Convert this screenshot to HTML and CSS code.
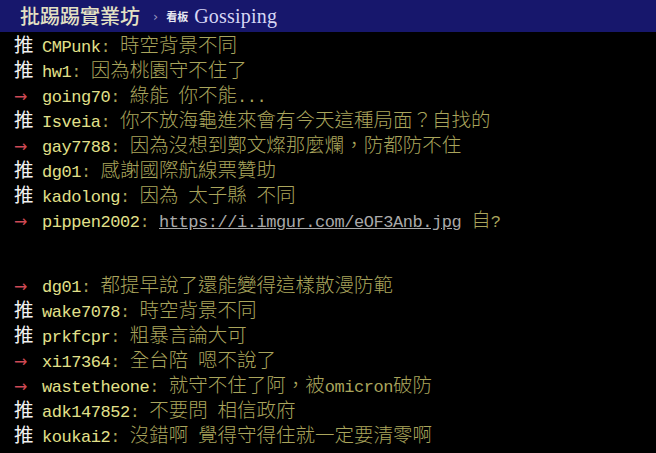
FILE: index.html
```html
<!DOCTYPE html>
<html lang="zh-Hant">
<head>
<meta charset="utf-8">
<title>批踢踢實業坊 › 看板 Gossiping</title>
<link rel="stylesheet" href="styles.css">
</head>
<body>
<header class="topbar">
  <span class="site">批踢踢實業坊</span>
  <span class="sep">›</span>
  <span class="board-label">看板</span>
  <span class="board">Gossiping</span>
</header>
<main class="comments">
  <div class="row"><span class="tag push">推</span><span class="user">CMPunk</span><span class="text"><span class="m">: </span>時空背景不同</span></div>
  <div class="row"><span class="tag push">推</span><span class="user">hw1</span><span class="text"><span class="m">: </span>因為桃園守不住了</span></div>
  <div class="row"><span class="tag arrow">→</span><span class="user">going70</span><span class="text"><span class="m">: </span>綠能<span class="m"> </span>你不能<span class="m">...</span></span></div>
  <div class="row"><span class="tag push">推</span><span class="user">Isveia</span><span class="text"><span class="m">: </span>你不放海龜進來會有今天這種局面？自找的</span></div>
  <div class="row"><span class="tag arrow">→</span><span class="user">gay7788</span><span class="text"><span class="m">: </span>因為沒想到鄭文燦那麼爛，防都防不住</span></div>
  <div class="row"><span class="tag push">推</span><span class="user">dg01</span><span class="text"><span class="m">: </span>感謝國際航線票贊助</span></div>
  <div class="row"><span class="tag push">推</span><span class="user">kadolong</span><span class="text"><span class="m">: </span>因為<span class="m"> </span>太子縣<span class="m"> </span>不同</span></div>
  <div class="row"><span class="tag arrow">→</span><span class="user">pippen2002</span><span class="text"><span class="m">: </span><a class="m link" href="#">https://i.imgur.com/eOF3Anb.jpg</a><span class="m"> </span>自<span class="m">?</span></span></div>
  <div class="gap"></div>
  <div class="row"><span class="tag arrow">→</span><span class="user">dg01</span><span class="text"><span class="m">: </span>都提早說了還能變得這樣散漫防範</span></div>
  <div class="row"><span class="tag push">推</span><span class="user">wake7078</span><span class="text"><span class="m">: </span>時空背景不同</span></div>
  <div class="row"><span class="tag push">推</span><span class="user">prkfcpr</span><span class="text"><span class="m">: </span>粗暴言論大可</span></div>
  <div class="row"><span class="tag arrow">→</span><span class="user">xi17364</span><span class="text"><span class="m">: </span>全台陪<span class="m"> </span>嗯不說了</span></div>
  <div class="row"><span class="tag arrow">→</span><span class="user">wastetheone</span><span class="text"><span class="m">: </span>就守不住了阿，被<span class="m">omicron</span>破防</span></div>
  <div class="row"><span class="tag push">推</span><span class="user">adk147852</span><span class="text"><span class="m">: </span>不要問<span class="m"> </span>相信政府</span></div>
  <div class="row"><span class="tag push">推</span><span class="user">koukai2</span><span class="text"><span class="m">: </span>沒錯啊<span class="m"> </span>覺得守得住就一定要清零啊</span></div>
</main>
</body>
</html>
```
FILE: styles.css
```css
html, body {
  margin: 0;
  padding: 0;
  background: #000;
}

body {
  width: 656px;
  height: 453px;
  overflow: hidden;
  font-family: "Noto Sans CJK TC", "Noto Sans CJK SC", sans-serif;
}

.topbar {
  height: 32px;
  background: #17176c;
  display: flex;
  align-items: center;
  padding-left: 20px;
  box-sizing: border-box;
}

.site {
  font-family: "Noto Sans CJK TC", sans-serif;
  font-size: 20px;
  font-weight: 500;
  color: #e4e1c4;
  line-height: 32px;
}

.sep {
  margin-left: 13px;
  font-family: "DejaVu Sans", sans-serif;
  font-size: 13px;
  color: #9a9ac0;
}

.board-label {
  margin-left: 8px;
  font-size: 11px;
  font-weight: 700;
  color: #e8e8f0;
}

.board {
  margin-left: 6px;
  font-family: "Liberation Serif", serif;
  font-size: 20px;
  letter-spacing: 0.2px;
  color: #d6d6f4;
}

.comments {
  display: block;
  margin-top: -1px;
}

.row {
  height: 25px;
  line-height: 25px;
  padding-left: 14px;
  font-size: 19.5px;
  font-weight: 300;
  white-space: nowrap;
}

.gap {
  height: 40px;
}

.tag {
  display: inline-block;
  width: 28px;
  font-weight: 400;
}

.push {
  color: #f2f2f2;
}

.arrow {
  color: #cf4a55;
  font-family: "DejaVu Sans", sans-serif;
  font-size: 16px;
}

.user,
.m {
  font-family: "Liberation Mono", monospace;
  font-size: 17px;
  font-weight: 400;
  letter-spacing: -0.45px;
}

.user {
  color: #e2e08a;
}

.text {
  color: #aaa55c;
}

.link {
  color: #a9a9a9;
  text-decoration: underline;
}
```
